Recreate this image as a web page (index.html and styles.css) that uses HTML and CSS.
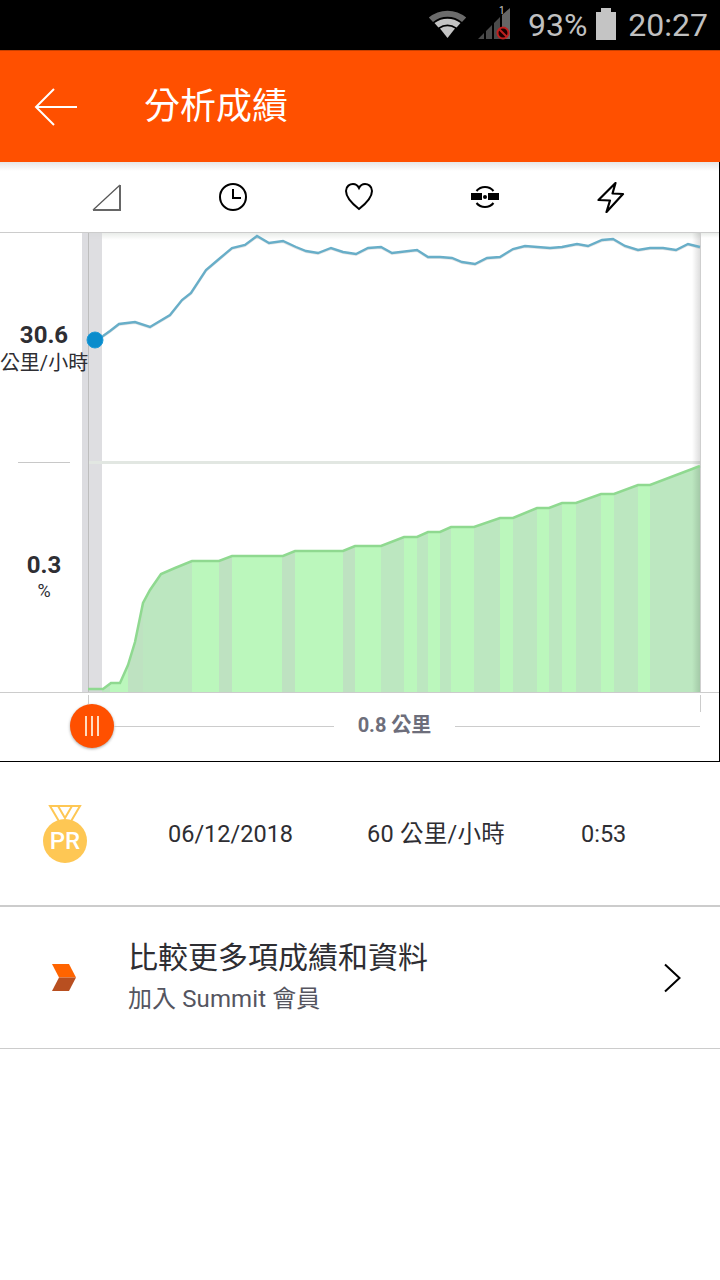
FILE: index.html
```html
<!DOCTYPE html>
<html lang="zh-Hant">
<head>
<meta charset="utf-8">
<title>分析成績</title>
<meta name="viewport" content="width=device-width,initial-scale=1">
<link rel="stylesheet" href="styles.css">
</head>

<body>
<!-- status bar -->
<div class="status">
  <svg class="st-wifi" width="40" height="30" viewBox="429 8 40 30">
    <path d="M429.8 16.5 A29 29 0 0 1 467.2 16.5 L463 21 A23 23 0 0 0 434 21 Z" fill="#6b6b6b"/>
    <path d="M435.5 22 A22 22 0 0 1 461.5 22 L457.6 26.4 A16 16 0 0 0 439.4 26.4 Z" fill="#c4c4c4"/>
    <path d="M441 27.6 A14.5 14.5 0 0 1 456 27.6 L448.5 37 Z" fill="#c4c4c4"/>
  </svg>
  <svg class="st-signal" width="32" height="36" viewBox="478 4 32 36">
    <path d="M478 39 L484 33 V39 Z M486 31 L492 25 V39 H486 Z M494 23 L500 17 V39 H494 Z" fill="#4a4a4a"/>
    <path d="M502 15 L510 8 V39 H502 Z" fill="#666"/>
    <text class="st-sim" x="499" y="14">1</text>
    <circle cx="503" cy="33" r="5.5" fill="#1a0000" stroke="#c02020" stroke-width="2"/>
    <path d="M499.5 29.5 L506.5 36.5" stroke="#c02020" stroke-width="2"/>
  </svg>
  <span class="st-pct">93%</span>
  <svg class="st-batt" width="20" height="32" viewBox="0 0 20 32">
    <path d="M5 0 H15 V4 H20 V32 H0 V4 H5 Z" fill="#c4c4c4"/>
  </svg>
  <span class="st-time">20:27</span>
</div>

<!-- app bar -->
<header class="appbar">
  <svg width="44" height="38" viewBox="34 87 44 38" fill="none" stroke="#fff" stroke-width="2">
    <path d="M54 88 L36 106 L54 124 M36 106 H77"/>
  </svg>
  <h1>分析成績</h1>
</header>

<section class="panel">
  <!-- filter icons -->
  <div class="tabs">
    <svg width="32" height="32" viewBox="91 181 32 32" fill="none">
      <path d="M93 210 L120 185" stroke="#555" stroke-width="1.2"/>
      <path d="M93 210 H120 V185" stroke="#666" stroke-width="2"/>
    </svg>
    <svg width="32" height="32" viewBox="217 181 32 32" fill="none" stroke="#000" stroke-width="2">
      <circle cx="233" cy="197" r="13"/>
      <path d="M233 189 V198 H241"/>
    </svg>
    <svg width="32" height="32" viewBox="343 181 32 32" fill="none" stroke="#000" stroke-width="2">
      <path d="M359 209 C350 202 346 196 346 191 C346 186 350 184 353 184 C356 184 358 186 359 188 C360 186 362 184 365 184 C368 184 372 186 372 191 C372 196 368 202 359 209 Z"/>
    </svg>
    <svg width="32" height="32" viewBox="469 181 32 32" fill="none" stroke="#000" stroke-width="2">
      <path d="M476.5 191 A11 11 0 0 1 493.5 191"/>
      <path d="M476.5 203 A11 11 0 0 0 493.5 203"/>
      <path d="M471 193 H482 V200 H471 Z M488 193 H499 V200 H488 Z" fill="#000" stroke="none"/>
      <circle cx="485" cy="197" r="2" fill="#000" stroke="none"/>
    </svg>
    <svg width="32" height="32" viewBox="594 181 32 32" fill="none" stroke="#000" stroke-width="2.2" stroke-linejoin="round">
      <path d="M614.5 183 L597.5 200 L609 200.5 L605.5 212 L622 194 L611.5 193.5 Z"/>
    </svg>
  </div>

  <!-- chart -->
  <div class="chart">
    <div class="metrics">
      <div class="metric">
        <b>30.6</b>
        <span>公里/小時</span>
      </div>
      <div class="metric-rule"></div>
      <div class="metric">
        <b>0.3</b>
        <span class="metric-pct">%</span>
      </div>
    </div>
    <svg class="plot" width="632" height="459" viewBox="88 233 632 459">
      <defs>
        <clipPath id="areaClip">
          <polygon points="88,692 88,689 103,689 111,683 120,683 128,665 135,642 143,603 150,590 161,574 175,568 192,561 219,561 232,556 283,556 295,551 343,551 355,546 381,546 404,537 417,537 428,532 440,532 451,527 474,527 500,518 513,518 537,508 549,508 562,503 576,503 601,494 614,494 638,485 650,485 700,466 700,692"/>
        </clipPath>
        <linearGradient id="topShade" x1="0" y1="0" x2="0" y2="1">
          <stop offset="0" stop-color="#e9ece9"/>
          <stop offset="1" stop-color="#fff"/>
        </linearGradient>
        <linearGradient id="edgeShade" x1="0" y1="0" x2="1" y2="0">
          <stop offset="0" stop-color="#000" stop-opacity="0"/>
          <stop offset="1" stop-color="#000" stop-opacity=".13"/>
        </linearGradient>
      </defs>

      <rect x="88" y="233" width="612" height="7" fill="url(#topShade)"/>
      <rect x="700" y="233" width="19" height="5" fill="url(#topShade)"/>

      <!-- grade area, flat stretches are the lighter bands -->
      <g clip-path="url(#areaClip)">
        <rect x="88" y="460" width="612" height="232" fill="#bce7c0"/>
        <rect x="128" y="460" width="15" height="232" fill="#bee2c1"/>
        <rect x="110" y="460" width="18" height="232" fill="#bbf7bc"/>
        <rect x="192" y="460" width="27" height="232" fill="#bbf7bc"/>
        <rect x="219" y="460" width="13" height="232" fill="#bee2c1"/>
        <rect x="232" y="460" width="50" height="232" fill="#bbf7bc"/>
        <rect x="282" y="460" width="13" height="232" fill="#bee2c1"/>
        <rect x="295" y="460" width="48" height="232" fill="#bbf7bc"/>
        <rect x="343" y="460" width="12" height="232" fill="#bee2c1"/>
        <rect x="355" y="460" width="26" height="232" fill="#bbf7bc"/>
        <rect x="404" y="460" width="13" height="232" fill="#bbf7bc"/>
        <rect x="428" y="460" width="12" height="232" fill="#bbf7bc"/>
        <rect x="451" y="460" width="23" height="232" fill="#bbf7bc"/>
        <rect x="500" y="460" width="13" height="232" fill="#bbf7bc"/>
        <rect x="537" y="460" width="12" height="232" fill="#bbf7bc"/>
        <rect x="562" y="460" width="14" height="232" fill="#bbf7bc"/>
        <rect x="601" y="460" width="13" height="232" fill="#bbf7bc"/>
        <rect x="638" y="460" width="12" height="232" fill="#bbf7bc"/>
      </g>

      <!-- selection band -->
      <rect x="82" y="233" width="6" height="459" fill="#dcdce0"/>
      <rect x="89" y="233" width="13" height="459" fill="#d6d6da" opacity=".8"/>
      <rect x="88" y="233" width="1" height="459" fill="#bdbdbd"/>

      <!-- divider and right edge -->
      <rect x="89" y="461" width="611" height="3" fill="#e2e7e2"/>
      <rect x="692" y="233" width="8" height="459" fill="url(#edgeShade)"/>
      <rect x="700" y="233" width="1" height="459" fill="#cfcfcf"/>

      <polyline class="line-green" points="88,689 103,689 111,683 120,683 128,665 135,642 143,603 150,590 161,574 175,568 192,561 219,561 232,556 283,556 295,551 343,551 355,546 381,546 404,537 417,537 428,532 440,532 451,527 474,527 500,518 513,518 537,508 549,508 562,503 576,503 601,494 614,494 638,485 650,485 700,466"/>

      <polyline class="line-shadow" points="95,341 103,337 110,332 119,325 135,323 150,328 170,316 182,301 191,294 206,271 219,260 232,249 245,246 257,237 269,244 283,242 296,248 306,252 318,254 331,249 343,253 356,255 368,249 381,248 392,254 417,251 428,258 440,258 452,259 462,263 475,265 487,259 500,258 513,250 525,247 550,249 562,248 577,245 588,247 602,241 613,240 625,247 638,251 650,249 663,249 676,251 688,245 700,248"/>
      <polyline class="line-blue" points="95,340 103,336 110,331 119,324 135,322 150,327 170,315 182,300 191,293 206,270 219,259 232,248 245,245 257,236 269,243 283,241 296,247 306,251 318,253 331,248 343,252 356,254 368,248 381,247 392,253 417,250 428,257 440,257 452,258 462,262 475,264 487,258 500,257 513,249 525,246 550,248 562,247 577,244 588,246 602,240 613,239 625,246 638,250 650,248 663,248 676,250 688,244 700,247"/>
      <circle cx="95" cy="340" r="8" fill="#0a8ccc" stroke="#1f9ad6" stroke-width="1"/>
    </svg>
  </div>

  <!-- distance scrubber -->
  <div class="scrub">
    <div class="thumb"><i></i><i></i><i></i></div>
    <div class="scrub-line"></div>
    <span class="scrub-label">0.8 公里</span>
    <div class="scrub-line scrub-line-end"></div>
  </div>
</section>

<!-- personal record -->
<div class="row row-pr">
  <svg class="medal" width="46" height="60" viewBox="42 804 46 60">
    <g fill="none" stroke="#fec754" stroke-width="2">
      <path d="M50 806 H80 L70 823 H60 Z"/>
      <path d="M58 806 L65 818 L72 806"/>
    </g>
    <circle cx="65" cy="841" r="22" fill="#fec754"/>
    <text class="medal-text" x="65" y="849">PR</text>
  </svg>
  <span>06/12/2018</span>
  <span class="pr-speed">60 公里/小時</span>
  <span>0:53</span>
</div>

<!-- summit upsell -->
<div class="row row-summit">
  <svg class="summit" width="24" height="28" viewBox="52 964 24 28">
    <path d="M52 964 H69 L76 977.5 H59 Z" fill="#ff6400"/>
    <path d="M59 977.5 H76 L69 991 H52 Z" fill="#b84f20"/>
  </svg>
  <div class="summit-text">
    <div class="summit-title">比較更多項成績和資料</div>
    <div class="summit-sub">加入 Summit 會員</div>
  </div>
  <svg width="18" height="30" viewBox="663 963 18 30" fill="none" stroke="#000" stroke-width="2">
    <path d="M665 964.5 L679.5 978 L665 991.5"/>
  </svg>
</div>
</body>
</html>
```

FILE: styles.css
```css
/* base */
*,*::before,*::after{box-sizing:border-box}
body{margin:0;background:#fff;color:#2e2e33;
     font-family:Roboto,"Noto Sans CJK TC",sans-serif}
svg{display:block;flex:none}

/* status bar */
.status{display:flex;align-items:center;justify-content:flex-end;
        height:50px;padding-right:12px;background:#000;color:#c0c0c0;
        font-size:32px}
.st-wifi{margin:-3px 10px 0 0}
.st-signal{margin:-6px 18px 0 0}
.st-sim{font-size:10px;fill:#ccc}
.st-batt{margin:-2px 12px 0 9px}

/* app bar */
.appbar{display:flex;align-items:center;gap:66px;
        height:112px;padding-left:34px;background:#ff5000;color:#fff;
        border-top:1px solid #c84000}
.appbar h1{margin:0;font-size:36px;font-weight:400;line-height:1}

/* panel */
.panel{border-right:1px solid #000;border-bottom:1px solid #000}
.tabs{display:flex;align-items:center;height:71px;padding:0 0 0 91px;gap:94px;
      border-bottom:1px solid #ccc;
      background:linear-gradient(#e6e6e6,#fff 9px)}
.tabs svg{margin-top:-1px}

.chart{display:grid;grid-template-columns:88px 632px;height:459px}
.metrics{display:flex;flex-direction:column;position:relative;z-index:1}
.metric{flex:1;display:flex;flex-direction:column;align-items:center;
        justify-content:center;white-space:nowrap}
.metric b{font-size:24px;line-height:30px}
.metric span{font-size:20px;line-height:26px}
.metric .metric-pct{font-size:18px;line-height:22px;margin-bottom:4px}
.metric-rule{height:1px;margin:0 18px;background:#c8c8c8}
.plot{overflow:visible}
.line-green{fill:none;stroke:#8fd990;stroke-width:2.5}
.line-blue{fill:none;stroke:#68aec8;stroke-width:2.4}
.line-shadow{fill:none;stroke:#000;stroke-opacity:.1;stroke-width:2}

/* scrubber */
.scrub{position:relative;display:flex;align-items:center;height:69px;
       padding:0 19px 2px 70px;border-top:1px solid #ccc}
.scrub::before,.scrub::after{content:"";position:absolute;top:2px;width:1px;background:#ccc}
.scrub::before{left:88px;height:9px}
.scrub::after{left:700px;height:17px}
.thumb{display:flex;align-items:center;justify-content:center;gap:4px;
       width:44px;height:44px;border-radius:50%;background:#ff5000;
       box-shadow:0 1px 3px rgba(0,0,0,.35);flex:none}
.thumb i{width:2px;height:20px;background:#ffdcc0}
.scrub-line{flex:1;height:1px;background:#ccc}
.scrub-line-end{flex:none;width:245px}
.scrub-label{width:121px;margin-top:-3px;text-align:center;
             font-size:20px;line-height:28px;font-weight:700;color:#6d6e7b}

/* rows */
.row{display:flex;align-items:center}
.row-pr{height:145px;padding-left:42px;font-size:23.5px;line-height:30px;border-bottom:2px solid #ccc}
.medal{margin-right:80px}
.row-pr span:nth-of-type(1){width:199px}
.row-pr .pr-speed{width:214px;letter-spacing:.25px}
.medal-text{font-size:24px;font-weight:500;fill:#fff;text-anchor:middle}

.row-summit{height:142px;padding-left:52px;border-bottom:1px solid #ccc}
.summit{margin-right:52px}
.summit-text{width:535px;padding-bottom:3px}
.summit-title{font-size:30px;line-height:40px;margin-bottom:5px}
.summit-sub{font-size:24px;line-height:32px;letter-spacing:.1px;color:#55555f}
```
